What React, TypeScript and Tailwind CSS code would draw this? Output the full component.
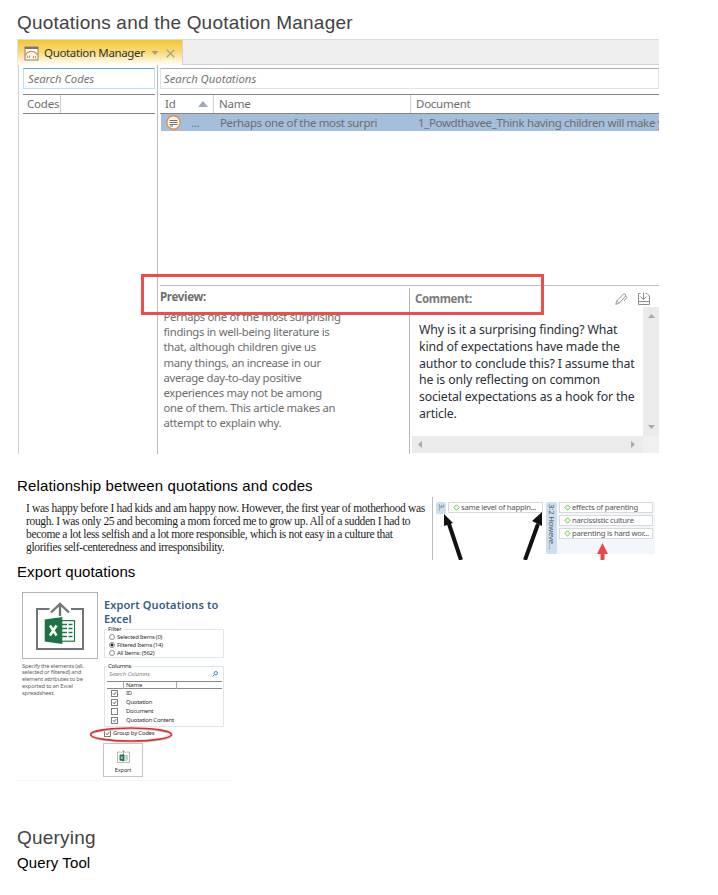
import React from "react";

const UI = "font-['Noto_Sans','Open_Sans',sans-serif]";

const Check = ({ on }: { on: boolean }) => (
  <svg className="size-[7px] shrink-0" viewBox="0 0 7 7" fill="none">
    <rect x=".5" y=".5" width="6" height="6" fill="#fff" stroke="#707070" strokeWidth=".9" />
    {on && <path d="M2 3.4 3.1 4.7 5.1 2.2" stroke="#444" strokeWidth=".9" />}
  </svg>
);

const Diamond = () => (
  <svg className="size-[7px] shrink-0" viewBox="0 0 7 7" fill="none">
    <path d="M3.5.8 6.2 3.5 3.5 6.2.8 3.5Z" fill="#f4fcf0" stroke="#6cc24a" strokeWidth="1" />
  </svg>
);

const Excel = ({ className }: { className: string }) => (
  <svg className={className} viewBox="0 0 50 50" fill="none">
    <path d="M14.500 8H2v40h46V8H36" stroke="#727577" strokeWidth="2" />
    <path d="M25 15V3M16 11.500 25 2.800 34 11.500" stroke="#727577" strokeWidth="2.400" />
    <rect x="24" y="19.600" width="15.500" height="20.600" fill="#fff" stroke="#1f7a4a" strokeWidth="1.200" />
    <path d="M27 23.500h5M33.500 23.500h4M27 27.500h5M33.500 27.500h4M27 31.500h5M33.500 31.500h4M27 35.500h5M33.500 35.500h4" stroke="#1f7a4a" strokeWidth="1.700" />
    <path d="M9.700 18.500 27.300 16v27L9.700 40.500Z" fill="#1e7245" />
    <path d="m15 24.500 6.500 10M21.500 24.500l-6.500 10" stroke="#fff" strokeWidth="2.500" />
  </svg>
);

function Manager() {
  return (
    <section className={`relative w-[642px] h-[415px] ${UI} text-[#6d6d6d]`}>
      <div className="flex h-[26px] border-t border-[#dcdcdc]">
        <div className="flex h-[25px] w-[165px] items-center bg-linear-to-b from-[#f3c62c] via-[#f8dc79] to-[#fffefa] border-l border-[#e2e2e2] pl-[6px] pt-[1px]">
          <svg className="size-[15px] shrink-0" viewBox="0 0 15 15" fill="none">
            <rect x="1" y="1" width="13" height="13" fill="#fff" stroke="#83807a" />
            <path d="M1 2h13" stroke="#73747c" strokeWidth="2" />
            <path d="M1.500 9.500C2.500 6.500 4.700 5.300 7.500 5.300s5 1.200 6 4.200" stroke="#ef8848" strokeWidth="1.300" />
            <path d="M3.500 12V9.500M5.500 12V9.500M9.500 12.500V10M11.500 12.500V10" stroke="#ef8848" strokeWidth="1.200" />
          </svg>
          <span className="ml-[5px] w-[101px] shrink-0 text-[11.500px] leading-[16px] tracking-[-.35px] whitespace-nowrap text-[#333]">Quotation Manager</span>
          <svg className="ml-[6px] h-[4px] w-[8px] shrink-0" viewBox="0 0 8 4"><path d="M.5 0h7L4 4Z" fill="#aaa080" /></svg>
          <svg className="ml-[7px] size-[9px] shrink-0" viewBox="0 0 9 9"><path d="m.7.700 7.600 7.600M8.300.700.700 8.300" stroke="#a8a28c" strokeWidth="1.300" /></svg>
        </div>
        <div className="h-[25px] flex-1 border-b border-l border-[#d2d2d2] bg-[#efefef]" />
      </div>
      <div className="ml-[1px] flex h-[389px] border-l border-[#cfcfcf]">
        <div className="w-[139px] border-r border-[#bcbcbc] pl-[4px] pr-[2px] pt-[3px]">
          <div className="flex h-[21px] items-center border border-t-[#63a1cf] border-[#c0ddef] pt-[1px] pl-[4px] text-[11.300px] tracking-[-.05px] text-[#757575] italic">Search Codes</div>
          <div className="mt-[5px] flex h-[20px] border-y border-[#858585]">
            <div className="flex w-[38px] shrink-0 items-center border-r border-[#d0d0d0] pl-[4px] text-[11.500px] tracking-[-.2px]">Codes</div>
          </div>
        </div>
        <div className="flex w-[501px] flex-col pl-[2px] pt-[3px]">
          <div className="flex h-[21px] shrink-0 items-center border border-t-[#acacba] border-[#dde2ea] pt-[2px] pl-[3px] text-[11.300px] text-[#757575] italic">Search Quotations</div>
          <div className="mt-[5px] flex h-[20px] shrink-0 border-y border-[#858585] text-[11.500px] tracking-[-.25px]">
            <div className="flex w-[54px] items-center border-r border-[#d0d0d0] pl-[5px]">Id
              <svg className="ml-[23px] h-[6px] w-[10px]" viewBox="0 0 10 6"><path d="M0 6 5 0l5 6Z" fill="#a0a9b8" /></svg>
            </div>
            <div className="flex w-[197px] items-center border-r border-[#d0d0d0] pl-[5px]">Name</div>
            <div className="flex items-center pl-[5px]">Document</div>
          </div>
          <div className="ml-[1px] flex h-[17px] shrink-0 items-center overflow-hidden bg-[#a5bedb] pt-[1px] text-[11.500px] tracking-[-.36px] whitespace-nowrap">
            <svg className="mt-[-2px] ml-[5px] size-[15px] shrink-0" viewBox="0 0 15 15"><circle cx="7.500" cy="7.500" r="6.700" fill="#fff8ef" stroke="#df8f52" strokeWidth="1.400" /><path d="M3.500 5.500h8M3.500 7.500h8M3.500 9.500h8M4 11h3" stroke="#77736e" /></svg>
            <span className="ml-[10px] w-[29px] shrink-0">...</span>
            <span className="w-[198px] shrink-0">Perhaps one of the most surpri</span>
            <span className="shrink-0">1_Powdthavee_Think having children will make y</span>
          </div>
          <div className="mt-[154px] flex flex-1 border-t border-[#c2c2c2]">
            <div className="w-[249px] shrink-0">
              <div className="h-[23px] pt-[3px] text-[11.500px] leading-[15px] font-bold tracking-[-.3px]">Preview:</div>
              <p className="pl-[3.500px] text-[11.300px] leading-[15.170px] tracking-[-.3px] whitespace-nowrap">
                Perhaps one of the most surprising<br />findings in well-being literature is<br />that, although children give us<br />many things, an increase in our<br />average day-to-day positive<br />experiences may not be among<br />one of them. This article makes an<br />attempt to explain why.
              </p>
            </div>
            <div className="mt-[2px] flex flex-1 flex-col border-l border-[#b5b5b5]">
              <div className="flex h-[19px] items-center pt-[2px] pl-[5px] text-[11.500px] font-bold tracking-[-.35px] text-[#7b7b7b]">
                <span className="w-[200px]">Comment:</span>
                <svg className="h-[12px] w-[13px]" viewBox="0 0 13 12" fill="none" stroke="#8d8d8d" strokeWidth=".9"><path d="M.8 11.300 2 7.500 8.300 1.300c1.200-1 3 .3 2.200 1.800L4.500 10ZM2 7.500 4.500 10M10.500 3l1.500 1.200-3 3.800" /></svg>
                <svg className="ml-[9px] size-[13px]" viewBox="0 0 13 13" fill="none" stroke="#8d8d8d"><path d="M3.500 1.500h-2v11h11V4L10 1.500H8.500M1.500 9.500h11M6.500.5V7M3.500 4.500l3 3 3-3" /></svg>
              </div>
              <div className="flex h-[129px]">
                <p className="w-[231px] shrink-0 pt-[15px] pl-[9px] text-[12.300px] leading-[16.800px] tracking-[-.14px] whitespace-nowrap text-[#2a3038]">Why is it a surprising finding? What<br />kind of expectations have made the<br />author to conclude this? I assume that<br />he is only reflecting on common<br />societal expectations as a hook for the<br />article.</p>
                <div className="ml-auto flex w-[16px] flex-col items-center justify-between bg-[#ebebeb] pt-[7px] pb-[7px]">
                  <svg className="h-[4px] w-[7px]" viewBox="0 0 7 4"><path d="M0 4 3.500 0 7 4Z" fill="#aaa" /></svg>
                  <svg className="h-[4px] w-[7px]" viewBox="0 0 7 4"><path d="m0 0 3.500 4L7 0Z" fill="#aaa" /></svg>
                </div>
              </div>
              <div className="ml-[2px] flex h-[17px] bg-[#ebebeb]">
                <div className="flex flex-1 items-center justify-between pr-[8px] pl-[6px]">
                  <svg className="h-[7px] w-[4px]" viewBox="0 0 4 7"><path d="M4 0 0 3.500 4 7Z" fill="#aaa" /></svg>
                  <svg className="h-[7px] w-[4px]" viewBox="0 0 4 7"><path d="m0 0 4 3.500L0 7Z" fill="#aaa" /></svg>
                </div>
                <div className="w-[16px] bg-[#f0f0f0]" />
              </div>
            </div>
          </div>
        </div>
      </div>
      <div className="absolute top-[235px] left-[124px] h-[41px] w-[403px] border-[3px] border-[#eb4f4b]" />
    </section>
  );
}

const CodeTag = ({ children }: { children: React.ReactNode }) => (
  <div className="flex h-[11px] items-center gap-[1px] border border-[#d9d9d9] bg-white pl-[4px] text-[7.700px] leading-[9px] tracking-[-.24px] whitespace-nowrap text-[#555]">
    <Diamond /><span>{children}</span>
  </div>
);

function Relationship() {
  return (
    <section className="flex h-[63px] w-[642px]">
      <p className="w-[415px] shrink-0 pt-[5px] pl-[9px] font-['Liberation_Serif',serif] text-[11.500px] leading-[13px] tracking-[-.33px] whitespace-nowrap text-[#1c1c1c]">
        I was happy before I had kids and am happy now. However, the first year of motherhood was<br />rough. I was only 25 and becoming a mom forced me to grow up. All of a sudden I had to<br />become a lot less selfish and a lot more responsible, which is not easy in a culture that<br />glorifies self-centeredness and irresponsibility.
      </p>
      <div className={`relative flex flex-1 border-l border-[#bbb] pt-[5px] pl-[3px] ${UI}`}>
        <div className="h-[12px] w-[10px] rounded-[2px] bg-[#cbdff1] pt-[2px] text-[7px] leading-[10px] tracking-[-.4px] text-[#666] [writing-mode:vertical-rl]">3..</div>
        <div className="ml-[2px] w-[95px]"><CodeTag>same level of happin...</CodeTag></div>
        <div className="ml-[3px] flex h-[52px] w-[109px] rounded-[2px] bg-[#f3f7fb]">
          <div className="w-[11px] rounded-[2px] bg-[#cbdff1] pt-[2px] text-[7.700px] leading-[11px] tracking-[-.15px] whitespace-nowrap text-[#555] [writing-mode:vertical-rl]">3:2 Howeve...</div>
          <div className="ml-[2px] flex w-[94px] flex-col gap-[2px]"><CodeTag>effects of parenting</CodeTag><CodeTag>narcissistic culture</CodeTag><CodeTag>parenting is hard wor...</CodeTag></div>
        </div>
        <svg className="absolute top-0 left-0 h-[63px] w-[208px]" viewBox="0 0 208 63">
          <path d="M15 24 28 63M105 27 92 63" stroke="#111" strokeWidth="4" />
          <path d="m11 17 9 9-9 3ZM109 15v14l-10-5Z" fill="#111" />
          <path d="M169.500 57v6" stroke="#e84848" strokeWidth="4" /><path d="m169.500 46 5.500 11h-11Z" fill="#e84848" />
        </svg>
      </div>
    </section>
  );
}

const Radio = ({ on, label }: { on?: boolean; label: string }) => (
  <div className="flex h-[8px] items-center gap-[2px] tracking-[-.27px] whitespace-nowrap">
    <svg className="size-[6px]" viewBox="0 0 6 6"><circle cx="3" cy="3" r="2.500" fill="#fff" stroke="#777" strokeWidth=".8" />{on && <circle cx="3" cy="3" r="1.400" fill="#222" />}</svg>
    <span>{label}</span>
  </div>
);

function Exporter() {
  return (
    <section className={`relative flex h-[192px] w-[215px] border-b border-[#f6f6f6] pt-[3px] pl-[5px] ${UI} text-[6px] text-[#333]`}>
      <div className="w-[76px]">
        <div className="flex h-[67px] items-center justify-center border border-[#b5b5b5]"><Excel className="size-[50px]" /></div>
        <p className="pt-[3.500px] text-[5.800px] leading-[6.800px] tracking-[-.22px] whitespace-nowrap text-[#666]">Specify the elements (all,<br />selected or filtered) and<br />element attributes to be<br />exported to an Excel<br />spreadsheet.</p>
      </div>
      <div className="ml-[6px] w-[120px] pt-[6px]">
        <h3 className="text-[11px] leading-[14px] font-semibold tracking-[.1px] whitespace-nowrap text-[#365b87]">Export Quotations to<br />Excel</h3>
        <fieldset className="h-[32px] border border-[#dce6ed] pl-[4px]"><legend className="ml-[-2px] h-[6px] px-[1px] text-[6px] leading-[6px] tracking-[-.1px] text-[#222]">Filter</legend><div className="pt-[1px]"><Radio label="Selected Items (0)" /><Radio on label="Filtered Items (14)" /><Radio label="All Items: (562)" /></div></fieldset>
        <fieldset className="mt-[5px] h-[64px] border border-[#dce6ed] px-[1px]"><legend className="ml-[1px] h-[6px] px-[1px] text-[6px] leading-[6px] tracking-[-.25px] text-[#222]">Columns</legend>
          <div className="flex h-[9px] items-center justify-between pt-[1px] pl-[3px] pr-[4px] text-[6px] tracking-[-.15px] text-[#888] italic"><span>Search Columns</span><svg className="size-[6px]" viewBox="0 0 6 6" fill="none" stroke="#3682c4"><circle cx="3.800" cy="2.200" r="1.700" /><path d="M2.500 3.500.5 5.500" /></svg></div>
          <div className="mt-[3px] ml-[1px] flex h-[8px] w-[115px] items-center border-y border-[#888]"><span className="h-[7px] w-[17px] border-r border-[#aaa]" /><span className="w-[53px] border-r border-[#aaa] pl-[2px] leading-[7px] tracking-[-.2px]">Name</span></div>
          {["ID", "Quotation", "Document", "Quotation Content"].map((label) => <div key={label} className="flex h-[9px] items-center pl-[5px] text-[6px] tracking-[-.28px] whitespace-nowrap"><Check on={label !== "Document"} /><span className="ml-[8px]">{label}</span></div>)}
        </fieldset>
        <div className="mt-[1px] flex h-[10px] items-center gap-[2px] text-[6px] tracking-[-.25px]"><Check on /><span>Group by Codes</span></div>
        <div className="mt-[5px] ml-[-1px] flex h-[34px] w-[40px] flex-col items-center border border-[#c5c5c5] pt-[6px]"><Excel className="size-[13px]" /><span className="pt-[3px] text-[5.500px] leading-[8px] tracking-[-.1px]">Export</span></div>
      </div>
      <svg className="absolute top-[137px] left-[72px] h-[18px] w-[86px]" viewBox="0 0 86 18" fill="none"><ellipse cx="42.500" cy="9.500" rx="40.500" ry="6.500" stroke="#ccc" strokeWidth="1.500" /><ellipse cx="42" cy="8.500" rx="40.500" ry="6.500" stroke="#e22b2b" strokeWidth="1.600" /></svg>
    </section>
  );
}

export default function App() {
  return (
    <main className="h-[895px] w-[718px] overflow-hidden bg-white pl-[17px] font-['Liberation_Sans',Arial,sans-serif] text-black">
      <h1 className="h-[39px] pt-[11px] text-[19px] leading-[23px] tracking-[.2px] whitespace-nowrap text-[#434343]">Quotations and the Quotation Manager</h1>
      <Manager />
      <h2 className="h-[43px] pt-[23px] text-[15px] leading-[18px] tracking-[.135px]">Relationship between quotations and codes</h2>
      <Relationship />
      <h2 className="h-[29px] pt-[3px] text-[15px] leading-[18px] tracking-[.1px]">Export quotations</h2>
      <Exporter />
      <h1 className="mt-[45px] h-[27px] text-[19px] leading-[23px] tracking-[.2px] text-[#434343]">Querying</h1>
      <h2 className="pt-[1px] text-[15px] leading-[18px] tracking-[.1px]">Query Tool</h2>
    </main>
  );
}
